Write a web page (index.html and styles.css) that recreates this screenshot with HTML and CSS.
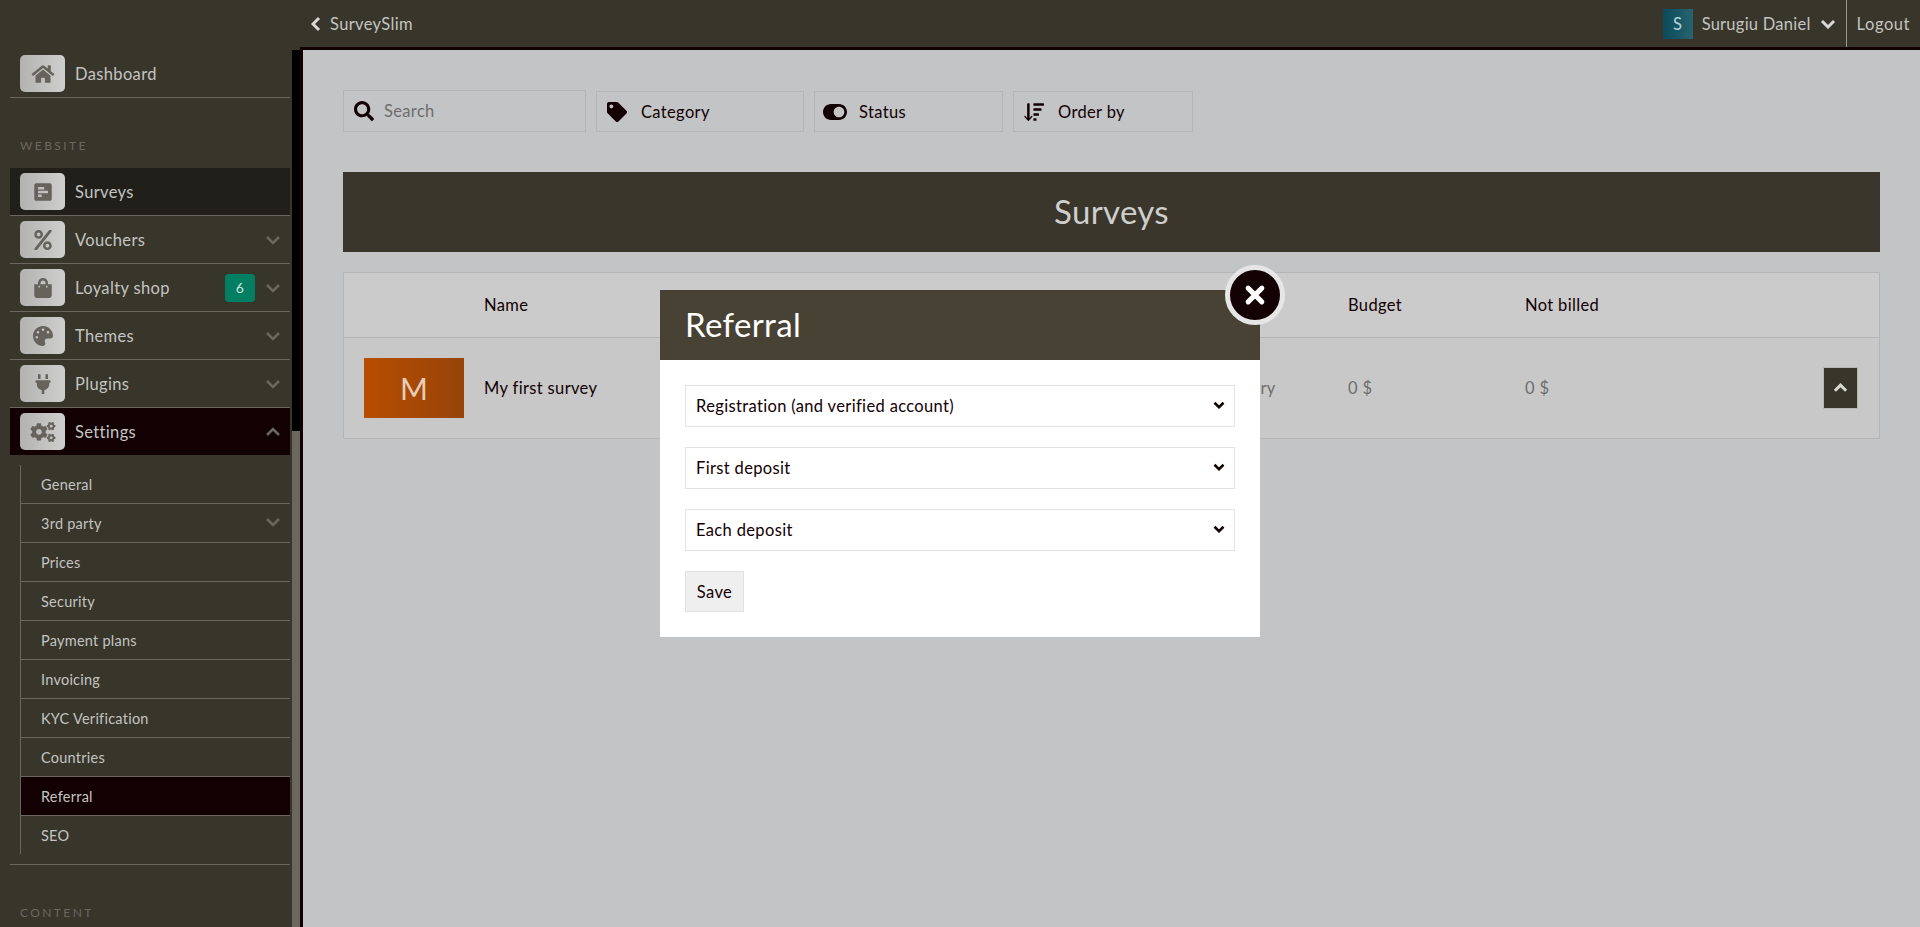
FILE: index.html
```html
<!DOCTYPE html>
<html lang="en">
<head>
  <meta charset="UTF-8">
  <title>Surveys</title>
  <link rel="stylesheet" href="styles.css">
</head>
<body>

<svg class="defs" aria-hidden="true">
  <symbol id="i-home" viewBox="0 0 576 512"><path d="M280.37 148.26L96 300.11V464a16 16 0 0 0 16 16l112.06-.29a16 16 0 0 0 15.92-16V368a16 16 0 0 1 16-16h64a16 16 0 0 1 16 16v95.64a16 16 0 0 0 16 16.05L464 480a16 16 0 0 0 16-16V300L295.67 148.26a12.19 12.19 0 0 0-15.3 0zM571.6 251.47L488 182.56V44.05a12 12 0 0 0-12-12h-56a12 12 0 0 0-12 12v72.61L318.47 43a48 48 0 0 0-61 0L4.34 251.47a12 12 0 0 0-1.6 16.9l25.5 31A12 12 0 0 0 45.15 301l235.22-193.74a12.19 12.19 0 0 1 15.3 0L530.9 301a12 12 0 0 0 16.9-1.6l25.5-31a12 12 0 0 0-1.7-16.93z"/></symbol>
  <symbol id="i-poll" viewBox="0 0 448 512"><path d="M448 432V80c0-26.5-21.5-48-48-48H48C21.5 32 0 53.5 0 80v352c0 26.5 21.5 48 48 48h352c26.5 0 48-21.5 48-48zM112 192c-8.84 0-16-7.16-16-16v-32c0-8.84 7.16-16 16-16h128c8.84 0 16 7.16 16 16v32c0 8.84-7.16 16-16 16H112zm0 96c-8.84 0-16-7.16-16-16v-32c0-8.84 7.16-16 16-16h224c8.84 0 16 7.16 16 16v32c0 8.84-7.16 16-16 16H112zm0 96c-8.84 0-16-7.16-16-16v-32c0-8.84 7.16-16 16-16h64c8.84 0 16 7.16 16 16v32c0 8.84-7.16 16-16 16h-64z"/></symbol>
  <symbol id="i-percent" viewBox="0 0 448 512"><path d="M112 224c61.9 0 112-50.1 112-112S173.9 0 112 0 0 50.1 0 112s50.1 112 112 112zm0-160c26.5 0 48 21.5 48 48s-21.5 48-48 48-48-21.5-48-48 21.5-48 48-48zm224 224c-61.9 0-112 50.1-112 112s50.1 112 112 112 112-50.1 112-112-50.1-112-112-112zm0 160c-26.5 0-48-21.5-48-48s21.5-48 48-48 48 21.5 48 48-21.5 48-48 48zM392.3.2l31.6.1c19.4.1 30.9 21.8 20 37.8L77.4 501.6a23.95 23.95 0 0 1-20 10.4l-33.4-.1c-19.5 0-30.9-21.9-19.7-37.8l368-463.7C377.2 4 384.5.2 392.3.2z"/></symbol>
  <symbol id="i-bag" viewBox="0 0 448 512"><path d="M352 160v-32C352 57.42 294.579 0 224 0 153.42 0 96 57.42 96 128v32H0v272c0 44.183 35.817 80 80 80h288c44.183 0 80-35.817 80-80V160h-96zm-192-32c0-35.29 28.71-64 64-64s64 28.71 64 64v32H160v-32zm160 120c-13.255 0-24-10.745-24-24s10.745-24 24-24 24 10.745 24 24-10.745 24-24 24zm-192 0c-13.255 0-24-10.745-24-24s10.745-24 24-24 24 10.745 24 24-10.745 24-24 24z"/></symbol>
  <symbol id="i-palette" viewBox="0 0 512 512"><path d="M204.3 5C104.9 24.4 24.8 104.3 5.2 203.4c-37 187 131.7 326.4 258.8 306.7 41.2-6.4 61.4-54.6 42.5-91.7-23.1-45.4 9.9-98.4 60.9-98.4h79.7c35.8 0 64.8-29.6 64.9-65.3C511.5 97.1 368.1-26.9 204.3 5zM96 320c-17.7 0-32-14.3-32-32s14.3-32 32-32 32 14.3 32 32-14.3 32-32 32zm32-128c-17.7 0-32-14.3-32-32s14.3-32 32-32 32 14.3 32 32-14.3 32-32 32zm128-64c-17.7 0-32-14.3-32-32s14.3-32 32-32 32 14.3 32 32-14.3 32-32 32zm128 64c-17.7 0-32-14.3-32-32s14.3-32 32-32 32 14.3 32 32-14.3 32-32 32z"/></symbol>
  <symbol id="i-plug" viewBox="0 0 384 512"><path d="M320 32a32 32 0 0 0-64 0v96h64Zm48 128H16A16 16 0 0 0 0 176v32a16 16 0 0 0 16 16H32v32A160.07 160.07 0 0 0 160 412.8V512h64V412.8A160.07 160.07 0 0 0 352 256V224h16a16 16 0 0 0 16-16V176A16 16 0 0 0 368 160ZM128 32a32 32 0 0 0-64 0v96h64Z"/></symbol>
  <symbol id="i-cogs" viewBox="0 0 640 512"><path d="M512.1 191l-8.2 14.3c-3 5.3-9.4 7.5-15.1 5.4-11.8-4.4-22.6-10.7-32.1-18.6-4.6-3.8-5.8-10.5-2.8-15.7l8.2-14.3c-6.9-8-12.3-17.3-15.9-27.4h-16.5c-6 0-11.2-4.3-12.2-10.3-2-12-2.1-24.6 0-37.1 1-6 6.2-10.4 12.2-10.4h16.5c3.6-10.1 9-19.4 15.9-27.4l-8.2-14.3c-3-5.2-1.9-11.9 2.8-15.7 9.5-7.9 20.4-14.2 32.1-18.6 5.7-2.1 12.1.1 15.1 5.4l8.2 14.3c10.5-1.9 21.2-1.9 31.7 0L552 6.3c3-5.3 9.4-7.5 15.1-5.4 11.8 4.4 22.6 10.7 32.1 18.6 4.6 3.8 5.8 10.5 2.8 15.7l-8.2 14.3c6.9 8 12.3 17.3 15.9 27.4h16.5c6 0 11.2 4.3 12.2 10.3 2 12 2.1 24.6 0 37.1-1 6-6.2 10.4-12.2 10.4h-16.5c-3.6 10.1-9 19.4-15.9 27.4l8.2 14.3c3 5.2 1.9 11.9-2.8 15.7-9.5 7.9-20.4 14.2-32.1 18.6-5.7 2.1-12.1-.1-15.1-5.4l-8.2-14.3c-10.4 1.9-21.2 1.9-31.7 0zm-10.5-58.8c38.5 29.6 82.4-14.3 52.8-52.8-38.5-29.7-82.4 14.3-52.8 52.8zM386.3 286.1l33.7 16.8c10.1 5.8 14.5 18.1 10.5 29.1-8.9 24.2-26.4 46.4-42.6 65.8-7.4 8.9-20.2 11.1-30.3 5.3l-29.1-16.8c-16 13.7-34.6 24.6-54.9 31.7v33.6c0 11.6-8.3 21.6-19.7 23.6-24.6 4.2-50.4 4.4-75.9 0-11.5-2-20-11.9-20-23.6V418c-20.3-7.2-38.9-18-54.9-31.7L74 403c-10 5.8-22.9 3.6-30.3-5.3-16.2-19.4-33.3-41.6-42.2-65.7-4-10.9.4-23.2 10.5-29.1l33.3-16.8c-3.9-20.9-3.9-42.4 0-63.4L12 205.8c-10.1-5.8-14.6-18.1-10.5-29 8.9-24.2 26-46.4 42.2-65.8 7.4-8.9 20.2-11.1 30.3-5.3l29.1 16.8c16-13.7 34.6-24.6 54.9-31.7V57.1c0-11.5 8.2-21.5 19.6-23.5 24.6-4.2 50.5-4.4 76-.1 11.5 2 20 11.9 20 23.6v33.6c20.3 7.2 38.9 18 54.9 31.7l29.1-16.8c10-5.8 22.9-3.6 30.3 5.3 16.2 19.4 33.2 41.6 42.1 65.8 4 10.9.1 23.2-10 29.1l-33.7 16.8c3.9 21 3.9 42.5 0 63.5zm-117.6 21.1c59.2-77-28.7-164.9-105.7-105.7-59.2 77 28.7 164.9 105.7 105.7zm243.4 182.7l-8.2 14.3c-3 5.3-9.4 7.5-15.1 5.4-11.8-4.4-22.6-10.7-32.1-18.6-4.6-3.8-5.8-10.5-2.8-15.7l8.2-14.3c-6.9-8-12.3-17.3-15.9-27.4h-16.5c-6 0-11.2-4.3-12.2-10.3-2-12-2.1-24.6 0-37.1 1-6 6.2-10.4 12.2-10.4h16.5c3.6-10.1 9-19.4 15.9-27.4l-8.2-14.3c-3-5.2-1.9-11.9 2.8-15.7 9.5-7.9 20.4-14.2 32.1-18.6 5.7-2.1 12.1.1 15.1 5.4l8.2 14.3c10.5-1.9 21.2-1.9 31.7 0l8.2-14.3c3-5.3 9.4-7.5 15.1-5.4 11.8 4.4 22.6 10.7 32.1 18.6 4.6 3.8 5.8 10.5 2.8 15.7l-8.2 14.3c6.9 8 12.3 17.3 15.9 27.4h16.5c6 0 11.2 4.3 12.2 10.3 2 12 2.1 24.6 0 37.1-1 6-6.2 10.4-12.2 10.4h-16.5c-3.6 10.1-9 19.4-15.9 27.4l8.2 14.3c3 5.2 1.9 11.9-2.8 15.7-9.5 7.9-20.4 14.2-32.1 18.6-5.7 2.1-12.1-.1-15.1-5.4l-8.2-14.3c-10.4 1.9-21.2 1.9-31.7 0zM501.6 431c38.5 29.6 82.4-14.3 52.8-52.8-38.5-29.6-82.4 14.3-52.8 52.8z"/></symbol>
  <symbol id="i-search" viewBox="0 0 512 512"><path d="M505 442.7L405.3 343c-4.5-4.5-10.6-7-17-7H372c27.6-35.3 44-79.7 44-128C416 93.1 322.9 0 208 0S0 93.1 0 208s93.1 208 208 208c48.3 0 92.7-16.4 128-44v16.3c0 6.4 2.5 12.5 7 17l99.7 99.7c9.4 9.4 24.6 9.4 33.9 0l28.3-28.3c9.4-9.4 9.4-24.6.1-34zM208 336c-70.7 0-128-57.2-128-128 0-70.7 57.2-128 128-128 70.7 0 128 57.2 128 128 0 70.7-57.2 128-128 128z"/></symbol>
  <symbol id="i-tag" viewBox="0 0 512 512"><path d="M0 252.118V48C0 21.49 21.49 0 48 0h204.118a48 48 0 0 1 33.941 14.059l211.882 211.882c18.745 18.745 18.745 49.137 0 67.882L293.823 497.941c-18.745 18.745-49.137 18.745-67.882 0L14.059 286.059A48 48 0 0 1 0 252.118zM112 64c-26.51 0-48 21.49-48 48s21.49 48 48 48 48-21.49 48-48-21.49-48-48-48z"/></symbol>
  <symbol id="i-toggle" viewBox="0 0 576 512"><path d="M384 64H192C86 64 0 150 0 256s86 192 192 192h192c106 0 192-86 192-192S490 64 384 64zm0 320c-70.8 0-128-57.3-128-128 0-70.8 57.3-128 128-128 70.8 0 128 57.3 128 128 0 70.8-57.3 128-128 128z"/></symbol>
  <symbol id="i-sort" viewBox="0 0 512 512"><path d="M187 360l-43 47V48a16 16 0 0 0-16-16H96a16 16 0 0 0-16 16v359l-43-47c-15-15-37 6-24 22l88 96a16 16 0 0 0 22 0l88-96c13-16-9-37-24-22z"/><rect x="240" y="32" width="272" height="64" rx="16"/><rect x="240" y="160" width="208" height="64" rx="16"/><rect x="240" y="288" width="144" height="64" rx="16"/><rect x="240" y="416" width="80" height="64" rx="16"/></symbol>
  <symbol id="i-down" viewBox="0 0 16 10"><path d="M2 2l6 6 6-6" fill="none" stroke="currentColor"/></symbol>
  <symbol id="i-up" viewBox="0 0 16 10"><path d="M2 8l6-6 6 6" fill="none" stroke="currentColor"/></symbol>
</svg>

<div class="app">
  <aside class="side">
    <nav class="side-nav">
      <a class="nav-row dash"><span class="tile"><svg class="tile-icon"><use href="#i-home"/></svg></span><span>Dashboard</span></a>

      <div class="nav-label">WEBSITE</div>
      <a class="nav-row is-current"><span class="tile"><svg class="tile-icon"><use href="#i-poll"/></svg></span><span>Surveys</span></a>
      <a class="nav-row"><span class="tile"><svg class="tile-icon"><use href="#i-percent"/></svg></span><span>Vouchers</span><svg class="caret"><use href="#i-down"/></svg></a>
      <a class="nav-row"><span class="tile"><svg class="tile-icon"><use href="#i-bag"/></svg></span><span>Loyalty shop</span><span class="badge">6</span><svg class="caret"><use href="#i-down"/></svg></a>
      <a class="nav-row"><span class="tile"><svg class="tile-icon"><use href="#i-palette"/></svg></span><span>Themes</span><svg class="caret"><use href="#i-down"/></svg></a>
      <a class="nav-row"><span class="tile"><svg class="tile-icon"><use href="#i-plug"/></svg></span><span>Plugins</span><svg class="caret"><use href="#i-down"/></svg></a>
      <a class="nav-row is-open"><span class="tile"><svg class="tile-icon"><use href="#i-cogs"/></svg></span><span>Settings</span><svg class="caret"><use href="#i-up"/></svg></a>

      <div class="sub-wrap">
        <ul class="sub">
          <li>General</li>
          <li>3rd party<svg class="caret"><use href="#i-down"/></svg></li>
          <li>Prices</li>
          <li>Security</li>
          <li>Payment plans</li>
          <li>Invoicing</li>
          <li>KYC Verification</li>
          <li>Countries</li>
          <li class="is-active">Referral</li>
          <li>SEO</li>
        </ul>
      </div>

      <div class="nav-label">CONTENT</div>
    </nav>
    <div class="track"><div class="thumb"></div></div>
  </aside>

  <div class="right">
    <header class="topbar">
      <a class="back"><svg class="back-icon"><use href="#i-down"/></svg>SurveySlim</a>
      <div class="user">
        <span class="avatar">S</span>
        <span>Surugiu Daniel</span>
        <svg class="user-caret"><use href="#i-down"/></svg>
      </div>
      <a class="logout">Logout</a>
    </header>

    <main class="main">
      <div class="filters">
        <label class="filter f-search"><svg class="filter-icon"><use href="#i-search"/></svg><span class="placeholder">Search</span></label>
        <div class="filter f-cat"><svg class="filter-icon"><use href="#i-tag"/></svg>Category</div>
        <div class="filter f-status"><svg class="filter-icon"><use href="#i-toggle"/></svg>Status</div>
        <div class="filter f-order"><svg class="filter-icon"><use href="#i-sort"/></svg>Order by</div>
      </div>

      <h1 class="page-title">Surveys</h1>

      <div class="table">
        <div class="tr th">
          <div></div>
          <div>Name</div>
          <div>Category</div>
          <div>Budget</div>
          <div>Not billed</div>
          <div></div>
        </div>
        <div class="tr td">
          <div><span class="thumb-m">M</span></div>
          <div class="survey-name">My first survey</div>
          <div>No category</div>
          <div>0 $</div>
          <div>0 $</div>
          <div class="end"><button class="up"><svg class="up-icon"><use href="#i-up"/></svg></button></div>
        </div>
      </div>
    </main>
  </div>
</div>

<div class="overlay">
  <div class="modal">
    <button class="close">
      <svg class="close-icon" viewBox="0 0 16 16"><path d="M3 3l10 10M13 3L3 13" fill="none" stroke="currentColor" stroke-width="3.6" stroke-linecap="round"/></svg>
    </button>
    <h2 class="modal-head">Referral</h2>
    <div class="modal-body">
      <div class="select-wrap">
        <select class="field"><option>Registration (and verified account)</option></select>
        <svg class="select-arrow"><use href="#i-down"/></svg>
      </div>
      <div class="select-wrap">
        <select class="field"><option>First deposit</option></select>
        <svg class="select-arrow"><use href="#i-down"/></svg>
      </div>
      <div class="select-wrap">
        <select class="field"><option>Each deposit</option></select>
        <svg class="select-arrow"><use href="#i-down"/></svg>
      </div>
      <button class="save">Save</button>
    </div>
  </div>
</div>

</body>
</html>
```

FILE: styles.css
```css
* {
  box-sizing: border-box;
}
html, body {
  margin: 0;
  height: 100%;
  overflow: hidden;
}
body {
  font-family: "Lato", "Open Sans", sans-serif;
  font-size: 16.5px;
  letter-spacing: 0.35px;
  color: #120003;
  background: #c3c4c6;
}
.defs {
  display: none;
}
.app {
  display: flex;
  height: 927px;
}

/* sidebar */
.side {
  display: flex;
  width: 300px;
  flex: none;
  background: #38352b;
}
.side-nav {
  width: 292px;
  padding: 55px 2px 0 10px;
  color: #c4c4c0;
  overflow: hidden;
}
.track {
  width: 8px;
  margin-top: 50px;
  background: #000;
  display: flex;
  flex-direction: column;
  justify-content: flex-end;
}
.thumb {
  height: 496px;
  background: #6b675f;
}
.nav-row {
  display: flex;
  align-items: center;
  height: 48px;
  padding: 0 9px 0 10px;
  border-bottom: 1px solid #6b675f;
}
.nav-row.dash {
  height: 43px;
  padding-bottom: 5px;
}
.nav-row.is-current {
  background: #201f1a;
}
.nav-row.is-open {
  background: #120003;
  border-bottom: 0;
  height: 47px;
}
.tile {
  width: 45px;
  height: 37px;
  margin-right: 10px;
  border-radius: 5px;
  background: linear-gradient(90deg, #b2b2b0, #cfcfcf);
  display: flex;
  align-items: center;
  justify-content: center;
  flex: none;
}
.tile-icon {
  width: 26px;
  height: 20px;
  fill: #66635c;
}
.nav-label {
  margin: 40px 0 15px 10px;
  font-size: 12px;
  line-height: 15px;
  letter-spacing: 2.4px;
  color: #6b675f;
}
.caret {
  width: 16px;
  height: 10px;
  margin-left: auto;
  color: #6b675f;
  stroke-width: 2.6;
  flex: none;
}
.badge {
  width: 30px;
  height: 28px;
  margin-left: auto;
  margin-right: 10px;
  border-radius: 4px;
  background: #027e62;
  color: #cfe3dc;
  font-size: 14px;
  display: flex;
  align-items: center;
  justify-content: center;
}
.badge + .caret {
  margin-left: 0;
}
.sub-wrap {
  padding: 10px 0 10px 10px;
  border-bottom: 1px solid #6b675f;
}
.sub {
  list-style: none;
  margin: 0;
  padding: 0;
  border-left: 1px solid #6b675f;
  font-size: 14.5px;
  letter-spacing: 0.25px;
}
.sub li {
  display: flex;
  align-items: center;
  height: 39px;
  padding: 0 9px 0 20px;
  border-bottom: 1px solid #6b675f;
}
.sub li:last-child {
  border-bottom: 0;
  height: 38px;
}
.sub li.is-active {
  background: #120003;
}
.sub .caret {
  margin-bottom: 3px;
}

/* top bar */
.right {
  flex: 1;
  display: flex;
  flex-direction: column;
  min-width: 0;
}
.topbar {
  height: 47px;
  flex: none;
  display: flex;
  align-items: center;
  background: #38352b;
  color: #c4c4c0;
}
.back {
  display: flex;
  align-items: center;
  margin-left: 8px;
}
.back-icon {
  width: 16px;
  height: 10px;
  margin-right: 6px;
  color: #d8d8d4;
  stroke-width: 3;
  transform: rotate(90deg);
}
.user {
  margin-left: auto;
  display: flex;
  align-items: center;
  letter-spacing: 0.25px;
}
.avatar {
  width: 30px;
  height: 30px;
  margin-right: 9px;
  background: linear-gradient(90deg, #0c4a5a, #27636f);
  color: #b9d4d8;
  display: flex;
  align-items: center;
  justify-content: center;
}
.user-caret {
  width: 16px;
  height: 10px;
  margin: 0 10px 0 9px;
  color: #d8d8d4;
  stroke-width: 3;
}
.logout {
  height: 47px;
  padding: 0 10px;
  display: flex;
  align-items: center;
  border-left: 1px solid #9a988f;
  letter-spacing: 0.55px;
}

/* main */
.main {
  flex: 1;
  padding: 40px 40px 0 40px;
  border-left: 3px solid #120003;
  border-top: 3px solid #120003;
  background: #c3c4c6;
}
.filters {
  display: flex;
  gap: 10px;
  align-items: flex-end;
}
.filter {
  height: 41px;
  display: flex;
  align-items: center;
  padding: 0 10px;
  border: 1px solid #b4b5b7;
}
.f-search { width: 243px; height: 42px; }
.f-cat { width: 208px; }
.f-status { width: 189px; }
.f-order { width: 180px; }
.filter-icon {
  width: 20px;
  height: 20px;
  margin-right: 14px;
  flex: none;
  fill: #120003;
}
.f-search .filter-icon {
  margin-right: 10px;
}
.f-status .filter-icon {
  width: 24px;
  height: 24px;
  margin: 0 12px 0 -2px;
}
.placeholder {
  color: #6e6e6e;
}
.page-title {
  height: 80px;
  margin: 40px 0 20px;
  background: #3a362b;
  color: #cfcfcd;
  font-size: 33px;
  font-weight: 400;
  line-height: 78px;
  text-align: center;
}
.table {
  border: 1px solid #b4b5b7;
}
.tr {
  display: grid;
  grid-template-columns: 140px 699px 165px 177px 1fr 56px;
  align-items: center;
}
.th {
  height: 65px;
  background: #cbcbcb;
  border-bottom: 1px solid #b4b5b7;
}
.td {
  height: 100px;
  background: #c8c8c8;
  color: #6e6e6e;
}
.survey-name {
  color: #120003;
}
.thumb-m {
  width: 100px;
  height: 60px;
  margin-left: 20px;
  background: linear-gradient(90deg, #b84d00, #96440a);
  color: #e6cdbb;
  font-size: 30px;
  display: flex;
  align-items: center;
  justify-content: center;
}
.end {
  display: flex;
}
.up {
  width: 35px;
  height: 42px;
  padding: 0;
  border: 1px solid #b4b5b7;
  background: #38352b;
  color: #d8d8d4;
  display: flex;
  align-items: center;
  justify-content: center;
}
.up-icon {
  width: 15px;
  height: 10px;
  stroke-width: 3.2;
}

/* modal */
.overlay {
  position: fixed;
  inset: 0;
  display: flex;
  justify-content: center;
  align-items: flex-start;
  padding-top: 290px;
}
.modal {
  position: relative;
  width: 600px;
  background: #fff;
}
.close {
  position: absolute;
  top: -25px;
  right: -25px;
  width: 60px;
  height: 60px;
  padding: 0;
  border: 5px solid #e6e6e6;
  border-radius: 50%;
  background: #120003;
  color: #fff;
  display: flex;
  align-items: center;
  justify-content: center;
}
.close-icon {
  width: 22px;
  height: 22px;
}
.modal-head {
  height: 70px;
  margin: 0;
  padding: 0 25px;
  background: #484234;
  color: #fff;
  font-size: 33px;
  font-weight: 400;
  line-height: 68px;
}
.modal-body {
  padding: 25px;
  display: flex;
  flex-direction: column;
  align-items: flex-start;
  gap: 20px;
}
.select-wrap {
  position: relative;
  width: 550px;
  height: 42px;
}
.field {
  width: 100%;
  height: 100%;
  padding: 0 10px;
  appearance: none;
  border: 1px solid #e2e2e2;
  border-radius: 0;
  background-color: #fff;
  color: #120003;
  font: inherit;
  letter-spacing: inherit;
}
.select-arrow {
  position: absolute;
  top: 16px;
  right: 10px;
  width: 12px;
  height: 8px;
  color: #120003;
  stroke-width: 3.4;
  pointer-events: none;
}
.save {
  width: 59px;
  height: 41px;
  padding: 0;
  border: 1px solid #e2e2e2;
  background: #efefef;
  color: #120003;
  font: inherit;
  letter-spacing: inherit;
}
```
